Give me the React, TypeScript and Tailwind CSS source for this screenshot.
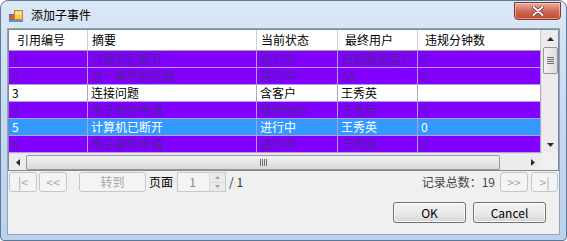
import React from "react";

type Row = { id: string; s: string; st: string; u: string; v: string; t: "p" | "w" | "sel" };

const rows: Row[] = [
  { id: "1", s: "计算机已断开", st: "进行中", u: "自助服务客户", v: "0", t: "p" },
  { id: "2", s: "这一事件的标题", st: "进行中", u: "SA", v: "0", t: "p" },
  { id: "3", s: "连接问题", st: "含客户", u: "王秀英", v: "", t: "w" },
  { id: "4", s: "电子邮件申请", st: "等待响应", u: "王秀英", v: "0", t: "p" },
  { id: "5", s: "计算机已断开", st: "进行中", u: "王秀英", v: "0", t: "sel" },
  { id: "6", s: "电子邮件申请", st: "进行中", u: "王秀英", v: "0", t: "p" },
];

const widths = ["w-[79px]", "w-[169px]", "w-[81px]", "w-[80px]", "w-[123px]"];

function Tri({ dir }: { dir: "up" | "down" | "left" | "right" }) {
  const pts = {
    up: "0,4 7,4 3.5,0",
    down: "0,0 7,0 3.5,4",
    left: "4,0 4,7 0,3.5",
    right: "0,0 0,7 4,3.5",
  }[dir];
  const w = dir === "up" || dir === "down" ? 7 : 4;
  const h = dir === "up" || dir === "down" ? 4 : 7;
  return (
    <svg width={w} height={h} viewBox={`0 0 ${w} ${h}`}>
      <polygon points={pts} fill="#2b2b2b" />
    </svg>
  );
}

function NavBtn({ label, w }: { label: string; w: string }) {
  return (
    <div
      className={`${w} h-[20px] flex items-center justify-center rounded-[3px] border border-[#c3c7cb] bg-[#f4f4f4] text-[12px] text-[#a7a7a7]`}
    >
      {label}
    </div>
  );
}

function WinBtn({ label }: { label: string }) {
  return (
    <div className="w-[73px] h-[21px] flex items-center justify-center rounded-[3px] border border-[#707070] bg-gradient-to-b from-[#f3f3f3] via-[#ebebeb] to-[#d5d5d5] text-[12px] text-black shadow-[inset_0_0_0_1px_#fcfcfc]">
      {label}
    </div>
  );
}

export default function App() {
  return (
    <div
      className="w-[567px] h-[241px] bg-white"
      style={{ fontFamily: '"Noto Sans CJK SC", "Noto Sans", sans-serif' }}
    >
      <div className="w-[567px] h-[241px] rounded-t-[8px] rounded-b-[4px] border border-[#5b7898] bg-gradient-to-b from-[#dbe8f6] via-[#c6daef] to-[#bcd2ea] flex flex-col">
        {/* Title bar */}
        <div className="h-[27px] flex items-start">
          <div className="mt-[9px] ml-[8px] w-[14px] h-[12px]">
            <svg width="14" height="12" viewBox="0 0 14 12">
              <rect x="0.5" y="4.5" width="5" height="5" fill="#e2562e" stroke="#4a76b3" />
              <rect x="5.5" y="0.5" width="8" height="9" fill="#f6c94a" stroke="#c98a22" />
              <rect x="6.5" y="1.5" width="6" height="3" fill="#fbe39a" />
              <rect x="0" y="10" width="14" height="2" fill="#5b8fd0" />
            </svg>
          </div>
          <div className="ml-[8px] mt-[5px] text-[12px] leading-[18px] text-black">添加子事件</div>
          <div className="ml-auto mr-[5px] mt-[1px] w-[47px] h-[18px] rounded-b-[4px] border border-[#7a3a30] bg-gradient-to-b from-[#e7b0a3] via-[#d06a55] to-[#bd4a35] flex items-center justify-center shadow-[inset_0_0_0_1px_rgba(255,220,210,0.5)]">
            <svg width="12" height="10" viewBox="0 0 12 10">
              <path d="M1.5 1 L10.5 9 M10.5 1 L1.5 9" stroke="#5a1a12" strokeWidth="3.2" strokeLinecap="round" />
              <path d="M1.5 1 L10.5 9 M10.5 1 L1.5 9" stroke="#ffffff" strokeWidth="2" strokeLinecap="round" />
            </svg>
          </div>
        </div>

        {/* Client area */}
        <div className="ml-[6px] w-[553px] h-[207px] border border-[#8da4c0] bg-[#f0f0f0] flex flex-col">
          {/* Grid */}
          <div className="w-[551px] h-[142px] border border-[#828790] bg-white flex flex-col">
            <div className="flex h-[123px]">
              <div className="w-[532px] flex flex-col overflow-hidden">
                {/* Header */}
                <div className="flex h-[21px] border-b border-[#a0a0a0] bg-white">
                  {["引用编号", "摘要", "当前状态", "最终用户", "违规分钟数"].map((h, i) => (
                    <div
                      key={h}
                      className={`${widths[i]} shrink-0 h-full flex items-center border-r border-[#d0d0d0] text-[12px] text-black ${
                        i === 0 ? "pl-[8px]" : i === 1 || i === 2 ? "pl-[4px]" : "pl-[7px]"
                      }`}
                    >
                      {h}
                    </div>
                  ))}
                </div>
                {rows.map((r) => {
                  const bg =
                    r.t === "p" ? "bg-[#8200ff] text-[#50219a]" : r.t === "sel" ? "bg-[#3399ff] text-white" : "bg-white text-black";
                  const cells = [r.id, r.s, r.st, r.u, r.v];
                  return (
                    <div key={r.id} className={`flex h-[17px] shrink-0 border-b border-[#b4a0d8] ${bg}`}>
                      {cells.map((c, i) => (
                        <div
                          key={i}
                          className={`${widths[i]} shrink-0 h-full flex items-center border-r border-[#b0a0d0] pl-[3px] text-[12px] leading-[16px] whitespace-nowrap overflow-hidden`}
                        >
                          {c}
                        </div>
                      ))}
                    </div>
                  );
                })}
              </div>
              {/* Vertical scrollbar */}
              <div className="w-[17px] h-full bg-[#ececec] border-l border-[#e4e4e4] flex flex-col items-center">
                <div className="h-[17px] w-full flex items-center justify-center">
                  <Tri dir="up" />
                </div>
                <div className="w-[15px] h-[27px] rounded-[2px] border border-[#979797] bg-gradient-to-r from-[#f4f4f4] to-[#dcdcdc] flex flex-col items-center justify-center gap-[1px]">
                  <div className="w-[7px] h-[1px] bg-[#6f6f6f]" />
                  <div className="w-[7px] h-[1px] bg-[#6f6f6f]" />
                  <div className="w-[7px] h-[1px] bg-[#6f6f6f]" />
                  <div className="w-[7px] h-[1px] bg-[#6f6f6f]" />
                </div>
                <div className="flex-1" />
                <div className="h-[17px] w-full flex items-center justify-center">
                  <Tri dir="down" />
                </div>
              </div>
            </div>
            {/* Horizontal scrollbar */}
            <div className="flex h-[17px]">
              <div className="w-[532px] h-full bg-[#ececec] border-t border-[#e4e4e4] flex items-center">
                <div className="w-[17px] h-full flex items-center justify-center">
                  <Tri dir="left" />
                </div>
                <div className="w-[474px] h-[15px] rounded-[2px] border border-[#979797] bg-gradient-to-b from-[#f4f4f4] to-[#d9d9d9] flex items-center justify-center gap-[1px]">
                  <div className="w-[1px] h-[7px] bg-[#6f6f6f]" />
                  <div className="w-[1px] h-[7px] bg-[#6f6f6f]" />
                  <div className="w-[1px] h-[7px] bg-[#6f6f6f]" />
                  <div className="w-[1px] h-[7px] bg-[#6f6f6f]" />
                </div>
                <div className="flex-1" />
                <div className="w-[17px] h-full flex items-center justify-center">
                  <Tri dir="right" />
                </div>
              </div>
              <div className="w-[17px] h-full bg-[#f0f0f0]" />
            </div>
          </div>

          {/* Pagination */}
          <div className="mt-[1px] h-[20px] flex items-center pl-[1px] pr-[1px]">
            <NavBtn label="|<" w="w-[28px]" />
            <div className="ml-[2px]">
              <NavBtn label="<<" w="w-[28px]" />
            </div>
            <div className="ml-[12px]">
              <NavBtn label="转到" w="w-[67px]" />
            </div>
            <div className="ml-[3px] text-[12px] text-black">页面</div>
            <div className="ml-[4px] w-[49px] h-[20px] border border-[#c6cacd] bg-[#f4f4f4] flex">
              <div className="flex-1 flex items-center justify-center text-[12px] text-[#8a8a8a] pr-[2px]">1</div>
              <div className="w-[16px] h-full flex flex-col border-l border-[#d8d8d8]">
                <div className="flex-1 flex items-center justify-center border-b border-[#d8d8d8] bg-[#eaeaea]">
                  <svg width="5" height="3" viewBox="0 0 5 3"><polygon points="0,3 5,3 2.5,0" fill="#a0a0a0" /></svg>
                </div>
                <div className="flex-1 flex items-center justify-center bg-[#eaeaea]">
                  <svg width="5" height="3" viewBox="0 0 5 3"><polygon points="0,0 5,0 2.5,3" fill="#a0a0a0" /></svg>
                </div>
              </div>
            </div>
            <div className="ml-[3px] text-[12px] text-[#333]">/ 1</div>
            <div className="ml-auto text-[12px] text-[#444]">记录总数：19</div>
            <div className="ml-[5px]">
              <NavBtn label=">>" w="w-[28px]" />
            </div>
            <div className="ml-[3px]">
              <NavBtn label=">|" w="w-[27px]" />
            </div>
          </div>

          {/* OK / Cancel */}
          <div className="mt-[10px] flex justify-end pr-[13px] gap-[7px]">
            <WinBtn label="OK" />
            <WinBtn label="Cancel" />
          </div>
        </div>
      </div>
    </div>
  );
}
